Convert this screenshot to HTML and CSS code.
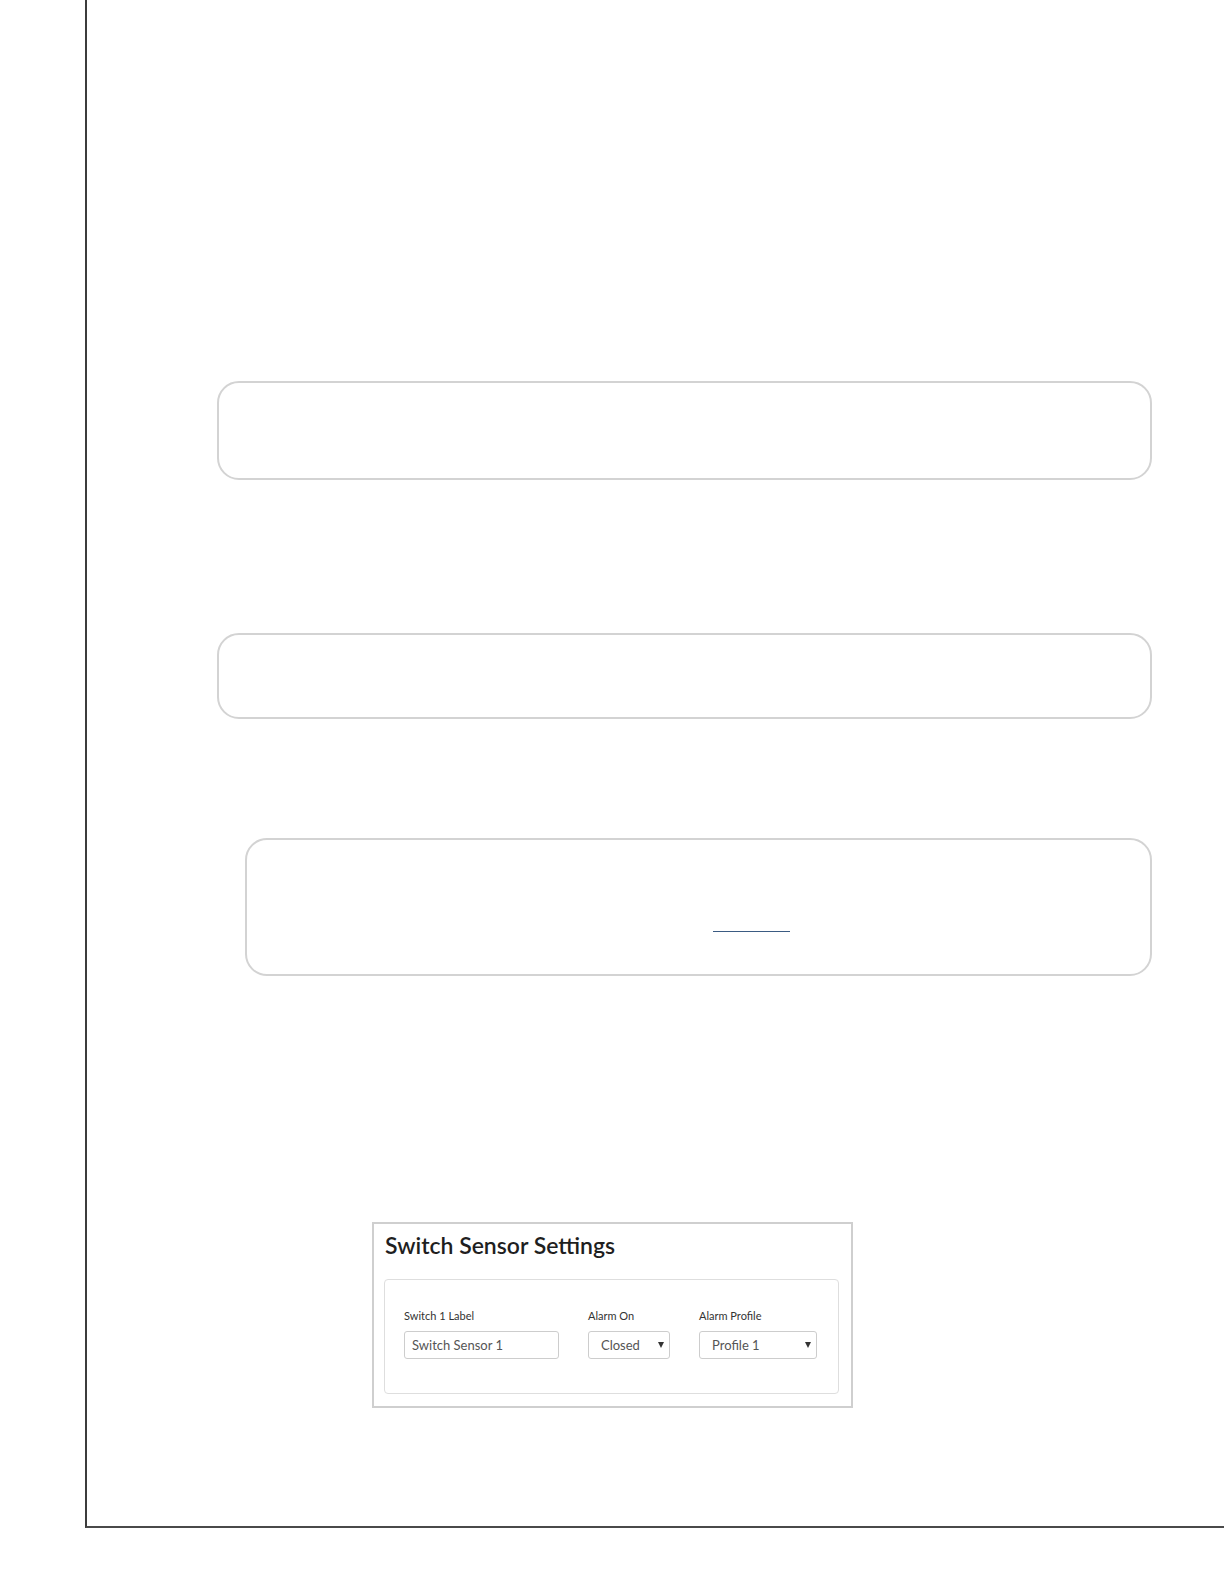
FILE: index.html
```html
<!DOCTYPE html>
<html lang="en">

<head>
    <meta charset="UTF-8">
    <title>Switch Sensor Settings</title>
    <link rel="stylesheet" href="styles.css">
</head>

<body>
    <div class="frame">
        <div class="box box-top"></div>
        <div class="box box-mid"></div>
        <div class="box box-link">
            <a class="doc-link" href="#"></a>
        </div>

        <section class="settings">
            <h2>Switch Sensor Settings</h2>
            <div class="settings-body">
                <div class="field field-label">
                    <label for="switchLabel">Switch 1 Label</label>
                    <input type="text" id="switchLabel" value="Switch Sensor 1">
                </div>
                <div class="field field-alarm">
                    <label for="alarmOn">Alarm On</label>
                    <span class="select-wrap">
                        <select id="alarmOn">
                            <option>Closed</option>
                            <option>Open</option>
                        </select>
                    </span>
                </div>
                <div class="field field-profile">
                    <label for="alarmProfile">Alarm Profile</label>
                    <span class="select-wrap">
                        <select id="alarmProfile">
                            <option>Profile 1</option>
                            <option>Profile 2</option>
                        </select>
                    </span>
                </div>
            </div>
        </section>
    </div>
</body>

</html>
```

FILE: styles.css
```css
body {
    margin: 0;
    background: #fff;
    font-family: "Lato", "Liberation Sans", sans-serif;
    color: #222;
}

.frame {
    box-sizing: border-box;
    height: 1528px;
    margin-left: 85px;
    padding-top: 381px;
    border-left: 2px solid #3c3c3c;
    border-bottom: 2px solid #4a4a4a;
}

.box {
    box-sizing: border-box;
    margin-right: 72px;
    border: 2px solid #d3d3d3;
    border-radius: 22px;
}

.box-top {
    height: 99px;
    margin-left: 130px;
    margin-bottom: 153px;
}

.box-mid {
    height: 86px;
    margin-left: 130px;
    margin-bottom: 119px;
}

.box-link {
    height: 138px;
    margin-left: 158px;
    margin-bottom: 246px;
    padding: 76px 0 0 466px;
}

.doc-link {
    display: block;
    width: 77px;
    height: 15px;
    border-bottom: 1px solid #3b5b82;
}

.settings {
    box-sizing: border-box;
    width: 481px;
    height: 186px;
    margin-left: 285px;
    padding: 0 12px 12px 10px;
    border: 2px solid #cfcfcf;
}

.settings h2 {
    margin: 0;
    padding: 7px 0 0 1px;
    height: 55px;
    box-sizing: border-box;
    font-size: 23px;
    font-weight: 600;
    color: #1f1f1f;
}

.settings-body {
    display: flex;
    gap: 29px;
    height: 115px;
    box-sizing: border-box;
    padding: 28px 19px 0;
    border: 1px solid #dedede;
    border-radius: 4px;
}

.field label {
    display: block;
    margin-bottom: 8px;
    font-size: 11px;
    line-height: 15px;
    color: #333;
}

.field input,
.field select {
    box-sizing: border-box;
    height: 28px;
    border: 1px solid #cdcdcd;
    border-radius: 3px;
    background: #fff;
    font-family: inherit;
    font-size: 13px;
    color: #555;
}

.field input {
    width: 155px;
    padding: 0 7px;
}

.field select {
    appearance: none;
    padding: 0 12px;
}

.field-alarm select {
    width: 82px;
}

.field-profile select {
    width: 118px;
}

.select-wrap {
    position: relative;
    display: inline-block;
}

.select-wrap::after {
    content: "";
    position: absolute;
    right: 6px;
    top: 11px;
    border-left: 3px solid transparent;
    border-right: 3px solid transparent;
    border-top: 6px solid #333;
    pointer-events: none;
}
```
